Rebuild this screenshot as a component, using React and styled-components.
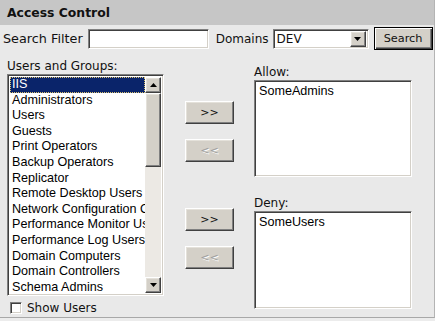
import React from "react";
import styled, { createGlobalStyle } from "styled-components";

const Global = createGlobalStyle`
  html, body { margin: 0; padding: 0; background: #ececec; }
  #root { width: 435px; height: 321px; }
`;

const Panel = styled.div`
  width: 434px;
  height: 317px;
  background: #e9e9e9;
  border-right: 1px solid #b4b4b4;
  border-bottom: 1px solid #a8a8a8;
  font-family: "DejaVu Sans", Verdana, sans-serif;
  font-size: 12px;
  color: #111;
  display: flex;
  flex-direction: column;
  overflow: hidden;
`;

const Header = styled.div`
  height: 25px;
  background: #c6c6c6;
  display: flex;
  align-items: center;
  padding-left: 7px;
  font-weight: bold;
  font-size: 12.4px;
  color: #111;
`;

const SearchRow = styled.div`
  display: flex;
  align-items: center;
  height: 23px;
  margin-top: 2px;
  padding-left: 3px;
`;

const Label = styled.span`
  white-space: nowrap;
  margin-right: ${(p) => p.$mr || 0}px;
  font-size: ${(p) => p.$fs || 12}px;
  line-height: 16px;
`;

const sunken = `
  border: 1px solid;
  border-color: #808080 #ffffff #ffffff #808080;
  box-shadow: inset 1px 1px #404040, inset -1px -1px #d4d0c8;
  background: #fff;
  box-sizing: border-box;
`;

const raised = `
  border: 1px solid;
  border-color: #ffffff #404040 #404040 #ffffff;
  box-shadow: inset -1px -1px #808080, inset 1px 1px #e4e1da;
  background: #d4d0c8;
  box-sizing: border-box;
`;

const TextInput = styled.div`
  ${sunken}
  width: 121px;
  height: 20px;
  margin-right: 7px;
`;

const Select = styled.div`
  ${sunken}
  width: 96px;
  height: 20px;
  display: flex;
  align-items: center;
  padding: 2px;
  margin-right: 5px;
  font-family: "DejaVu Sans", Verdana, sans-serif;
  font-size: 12px;
`;

const SelectValue = styled.span`
  flex: 1;
  padding-left: 1px;
`;

const ArrowButton = styled.div`
  ${raised}
  width: ${(p) => p.$w || 16}px;
  height: ${(p) => p.$h || 16}px;
  display: flex;
  align-items: center;
  justify-content: center;
  flex: none;
`;

const SearchButton = styled.button`
  width: 59px;
  height: 23px;
  padding: 0;
  border: 1px solid #000;
  background: #d4d0c8;
  box-shadow: inset 1px 1px #fff, inset -1px -1px #404040, inset -2px -2px #808080;
  font-family: "DejaVu Sans", Verdana, sans-serif;
  font-size: 11.3px;
  color: #111;
`;

const Main = styled.div`
  display: flex;
  padding-left: 7px;
`;

const LeftCol = styled.div`
  width: 157px;
  display: flex;
  flex-direction: column;
`;

const ColLabel = styled.div`
  line-height: 16px;
  margin-top: ${(p) => p.$mt || 0}px;
  margin-bottom: ${(p) => p.$mb || 0}px;
  white-space: nowrap;
`;

const ListBox = styled.div`
  ${sunken}
  width: 157px;
  height: 222px;
  padding: 2px;
  display: flex;
`;

const Items = styled.div`
  flex: 1;
  overflow: hidden;
  font-family: "Liberation Sans", Arial, sans-serif;
  font-size: 12.6px;
  color: #000;
`;

const Item = styled.div`
  height: 15.6px;
  line-height: 15px;
  padding-left: 2px;
  white-space: nowrap;
  overflow: hidden;
  box-sizing: border-box;
  ${(p) =>
    p.$selected &&
    `background: #0a246a; color: #fff; outline: 1px dotted #d8c070; outline-offset: -1px;`}
`;

const ScrollBar = styled.div`
  width: 16px;
  display: flex;
  flex-direction: column;
  background: #ece9e4;
`;

const Thumb = styled.div`
  ${raised}
  height: 74px;
`;

const Track = styled.div`
  flex: 1;
`;

const CheckRow = styled.div`
  display: flex;
  align-items: center;
  height: 14px;
  margin-top: 5px;
  padding-left: 3px;
`;

const CheckBox = styled.span`
  ${sunken}
  width: 12px;
  height: 12px;
  margin-right: 5px;
  flex: none;
`;

const CheckText = styled.span`
  line-height: 14px;
  white-space: nowrap;
`;

const MidCol = styled.div`
  width: 49px;
  margin-left: 21px;
  display: flex;
  flex-direction: column;
  padding-top: 51px;
`;

const MoveButton = styled.button`
  ${raised}
  width: 49px;
  height: 23px;
  padding: 0;
  margin-top: ${(p) => p.$mt || 0}px;
  font-family: "DejaVu Sans", Verdana, sans-serif;
  font-size: 11px;
  color: ${(p) => (p.disabled ? "#a0a0a0" : "#111")};
  text-shadow: ${(p) => (p.disabled ? "1px 1px #fff" : "none")};
`;

const RightCol = styled.div`
  width: 158px;
  margin-left: 20px;
  display: flex;
  flex-direction: column;
`;

const TextArea = styled.div`
  ${sunken}
  width: 158px;
  height: ${(p) => p.$h}px;
  padding: 3px 4px;
  font-family: "Liberation Sans", Arial, sans-serif;
  font-size: 12.6px;
  color: #000;
  line-height: 15px;
`;

const UpTri = () => (
  <svg width="7" height="4" viewBox="0 0 7 4"><path d="M3.5 0 L7 4 L0 4 Z" fill="#000" /></svg>
);
const DownTri = () => (
  <svg width="7" height="4" viewBox="0 0 7 4"><path d="M0 0 L7 0 L3.5 4 Z" fill="#000" /></svg>
);

const groups = [
  "IIS",
  "Administrators",
  "Users",
  "Guests",
  "Print Operators",
  "Backup Operators",
  "Replicator",
  "Remote Desktop Users",
  "Network Configuration Operators",
  "Performance Monitor Users",
  "Performance Log Users",
  "Domain Computers",
  "Domain Controllers",
  "Schema Admins",
];

export default function App() {
  return (
    <>
      <Global />
      <Panel>
        <Header>Access Control</Header>
        <SearchRow>
          <Label $mr={5} $fs={12.8}>Search Filter</Label>
          <TextInput />
          <Label $mr={4}>Domains</Label>
          <Select>
            <SelectValue>DEV</SelectValue>
            <ArrowButton $w={16} $h={16}><DownTri /></ArrowButton>
          </Select>
          <SearchButton>Search</SearchButton>
        </SearchRow>
        <Main>
          <LeftCol>
            <ColLabel $mt={8}>Users and Groups:</ColLabel>
            <ListBox>
              <Items>
                {groups.map((g, i) => (
                  <Item key={g} $selected={i === 0}>{g}</Item>
                ))}
              </Items>
              <ScrollBar>
                <ArrowButton><UpTri /></ArrowButton>
                <Thumb />
                <Track />
                <ArrowButton><DownTri /></ArrowButton>
              </ScrollBar>
            </ListBox>
            <CheckRow>
              <CheckBox />
              <CheckText>Show Users</CheckText>
            </CheckRow>
          </LeftCol>
          <MidCol>
            <MoveButton>&gt;&gt;</MoveButton>
            <MoveButton $mt={15} disabled>&lt;&lt;</MoveButton>
            <MoveButton $mt={46}>&gt;&gt;</MoveButton>
            <MoveButton $mt={15} disabled>&lt;&lt;</MoveButton>
          </MidCol>
          <RightCol>
            <ColLabel $mt={14}>Allow:</ColLabel>
            <TextArea $h={97}>SomeAdmins</TextArea>
            <ColLabel $mt={18}>Deny:</ColLabel>
            <TextArea $h={98}>SomeUsers</TextArea>
          </RightCol>
        </Main>
      </Panel>
    </>
  );
}
